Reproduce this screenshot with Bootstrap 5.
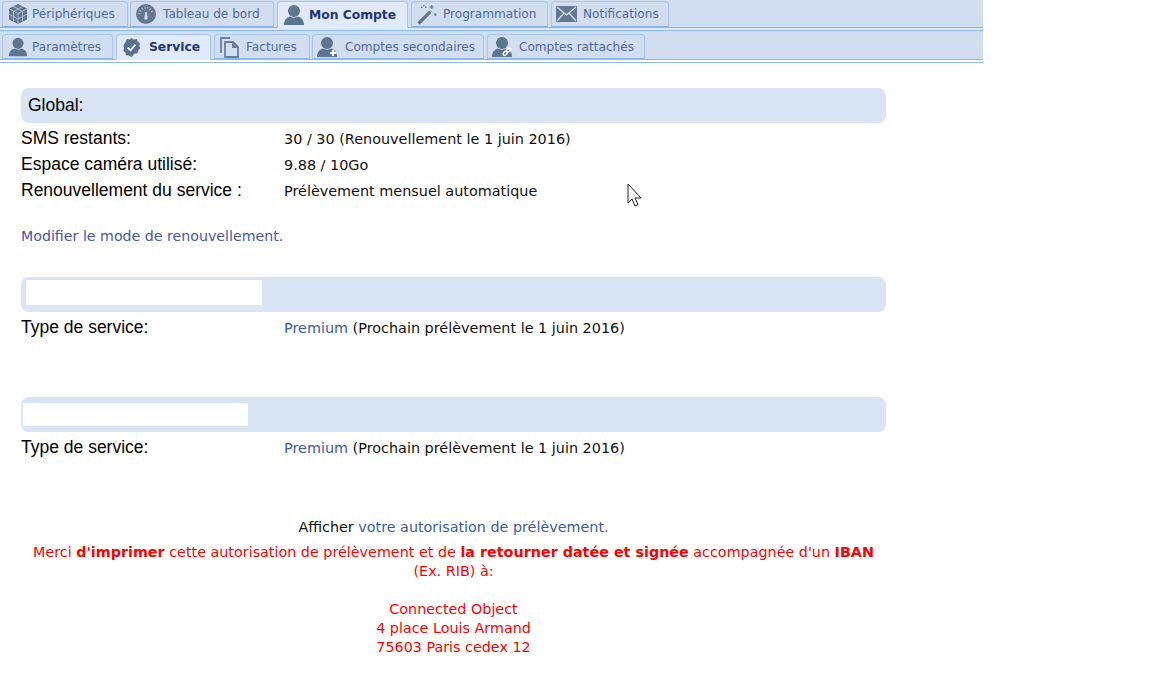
<!DOCTYPE html>
<html lang="fr">
<head>
<meta charset="utf-8">
<title>Service</title>
<link href="https://cdn.jsdelivr.net/npm/bootstrap@5.3.0/dist/css/bootstrap.min.css" rel="stylesheet">
<style>
html,body{height:686px;overflow:hidden;background:#fff}
body{font-family:"DejaVu Sans",sans-serif;font-size:14px;color:#111}
.tabstrip{width:983px;background:#d0deef;display:flex;padding-left:2px;margin:0;list-style:none}
.strip-a{height:28px;padding-top:1px;border-bottom:1px solid #93b2d8;box-shadow:0 2px 0 #dfe9f6}
.strip-b{height:30px;margin-top:2px;padding-top:3px;border-top:1px solid #8db8ee;border-bottom:1px solid #8db8ee;box-shadow:0 2px 0 #fff,0 3px 0 #8db8ee}
.tabbox{height:100%;display:flex;align-items:center;gap:5px;padding:1px 6px 0 4px;border:1px solid #a9c5ea;border-bottom:1px solid #8db8ee;border-radius:4px 4px 0 0;color:#4f6a96;font-size:12.1px;white-space:nowrap;background:#d0deef;box-sizing:border-box}
.tabbox.current{background:#dfeafa;color:#1f3471;font-weight:700;font-size:12.3px;border-bottom-color:#dfeafa;height:calc(100% + 1px)}
.tabbox svg{flex:none;display:block;margin-top:-1px}
.w-a{width:126px;gap:3px}.w-b{width:144px;margin-left:2px;gap:6px}.w-c{width:131px;margin-left:3px;gap:3px}.w-d{width:137px;margin-left:3px}.w-e{width:118px;margin-left:3px;gap:6px}
.w-f{width:111px;gap:3px}.w-g{width:95px;margin-left:3px;gap:7px}.w-h{width:96px;margin-left:3px}.w-i{width:172px;margin-left:2px;gap:6px}.w-j{width:158px;margin-left:3px}
.zone{width:865px;margin-left:21px;position:relative}
.headbar{height:35px;background:#d9e4f4;border-radius:8px;display:flex;align-items:center;padding-left:7px;font-family:"Liberation Sans",Arial,sans-serif;font-size:17.5px;color:#000}
.firstbar{margin-top:28px}
.maskbox{background:#fff}
.mask-a{width:236px;height:25px;margin-left:-2px;margin-top:-4px}
.mask-b{width:225px;height:23px;margin-left:-5px}
.datarow{display:flex;align-items:center;height:26px}
.lab{width:263px;flex:none;font-family:"Liberation Sans",Arial,sans-serif;font-size:17.5px;color:#000;margin-top:-4px}
.val{font-size:14.4px;color:#111}
.lnk{color:#3d5a9e;text-decoration:none}
.modlink{display:block;margin-top:21px;font-size:14.2px;line-height:20px;color:#48579d;text-decoration:none}
.sec-b{margin-top:31px}
.sec-c{margin-top:55px}
.closing{margin-top:56px;text-align:center;font-size:14.33px;line-height:19px;color:#f00}
.closing p{margin:0}
.closing b{font-weight:700}
.blk{color:#111;margin-bottom:6px!important}
.addr{margin-top:19px!important}
.arrowmark{position:absolute;left:627px;top:183px}
</style>
</head>
<body>
<ul class="tabstrip strip-a">
<li class="tabbox w-a"><svg width="22" height="22" viewBox="0 0 22 22"><path fill="#64778f" d="M11 1l9 4.500v11L11 21l-9-4.500v-11z"/><path fill="none" stroke="#b4c2d6" stroke-width=".9" d="M2.500 6L11 10.500 19.500 6M11 10.500V21M6.500 3.500L15.500 8.500v10M15.500 3.500L6.500 8.500v10M2.500 11.500L11 16l8.500-4.500"/></svg>Périphériques</li>
<li class="tabbox w-b"><svg width="22" height="22" viewBox="0 0 22 22"><circle cx="11" cy="11" r="10" fill="#64778f"/><path stroke="#b4c2d6" stroke-width="2" stroke-dasharray="1 1.800" fill="none" d="M4.500 11a6.500 6.500 0 0 1 13 0"/><path fill="#d0deef" d="M10.300 9h1.400l.8 5h-3z"/><circle cx="11" cy="15" r="1.800" fill="#d0deef"/></svg>Tableau de bord</li>
<li class="tabbox w-c current"><svg width="24" height="22" viewBox="0 0 24 22"><circle cx="12" cy="7" r="6" fill="#5f7490"/><path fill="#5f7490" d="M2 21c0-6 4-8 6-8.500 2 1.500 6 1.500 8 0 2 .5 6 2.500 6 8.500z"/></svg>Mon Compte</li>
<li class="tabbox w-d"><svg width="22" height="22" viewBox="0 0 22 22"><path stroke="#64778f" stroke-width="3.200" d="M2.500 20.500L15 8"/><path stroke="#e4ecf7" stroke-width="1" d="M13 7l3 3"/><g fill="#7588a5"><path d="M7 2h1.500v1.500H7zM5 3.500h1.500V5H5zM9 3.500h1.500V5H9zM15 2h1.500v4H15zM13.500 3.300h4v1.400h-4zM18.500 10h1.400v3h-1.400zM17.700 11h3v1.200h-3z"/></g></svg>Programmation</li>
<li class="tabbox w-e"><svg width="21" height="16" viewBox="0 0 21 16"><rect width="21" height="16" fill="#64778f"/><path fill="none" stroke="#d0deef" stroke-width="1.300" d="M1 1l9.500 8L20 1M1 15l7-8M20 15l-7-8"/></svg>Notifications</li>
</ul>
<ul class="tabstrip strip-b">
<li class="tabbox w-f"><svg width="22" height="22" viewBox="0 0 24 22"><circle cx="12" cy="7" r="6" fill="#5f7490"/><path fill="#5f7490" d="M2 21c0-6 4-8 6-8.500 2 1.500 6 1.500 8 0 2 .5 6 2.500 6 8.500z"/></svg>Paramètres</li>
<li class="tabbox w-g current"><svg width="21" height="21" viewBox="0 0 22 22"><path fill="#5c6f8e" d="M11 1l2.500 1.500 3-.3 1 2.800 2.500 1.700-.8 2.800 1 2.500-2.300 2-.6 3-3 .3L11 21l-2.800-1.500-3-.3-.6-3-2.300-2 1-2.500-.8-2.800L5 5l1-2.800 3 .3z"/><path fill="none" stroke="#e6eefa" stroke-width="2" d="M7 11l3 3 5-6"/></svg>Service</li>
<li class="tabbox w-h"><svg width="22" height="22" viewBox="0 0 22 22"><path fill="none" stroke="#6d7f9f" stroke-width="1.800" d="M2 17V2h9M6 21V6h8l5 5v10z"/><path fill="#6d7f9f" d="M13 6h2l4 4v2h-6z"/></svg>Factures</li>
<li class="tabbox w-i"><svg width="22" height="22" viewBox="0 0 22 22"><circle cx="10" cy="7" r="6" fill="#5f7490"/><path fill="#5f7490" d="M0 21c0-6 4-8 6-8.500 2 1.500 6 1.500 8 0 2 .5 6 2.500 6 8.500z"/><path stroke="#fff" stroke-width="2" d="M16 14v6M13 17h6"/></svg>Comptes secondaires</li>
<li class="tabbox w-j"><svg width="22" height="22" viewBox="0 0 22 22"><circle cx="10" cy="7" r="6" fill="#5f7490"/><path fill="#5f7490" d="M0 21c0-6 4-8 6-8.500 2 1.500 6 1.500 8 0 2 .5 6 2.500 6 8.500z"/><g fill="none" stroke="#fff" stroke-width="1.500"><rect x="11" y="16" width="4.500" height="3" rx="1.500" transform="rotate(-45 13 17.500)"/><rect x="14.500" y="12.500" width="4.500" height="3" rx="1.500" transform="rotate(-45 16.500 14)"/></g></svg>Comptes rattachés</li>
</ul>
<main class="zone" id="svc">
<div class="headbar firstbar" id="h1">Global:</div>
<div class="datarow mt-1"><div class="lab">SMS restants:</div><div class="val">30 / 30 (Renouvellement le 1 juin 2016)</div></div>
<div class="datarow"><div class="lab">Espace caméra utilisé:</div><div class="val">9.88 / 10Go</div></div>
<div class="datarow"><div class="lab">Renouvellement du service :</div><div class="val">Prélèvement mensuel automatique</div></div>
<a class="modlink" href="#">Modifier le mode de renouvellement.</a>
<div class="headbar sec-b"><div class="maskbox mask-a"></div></div>
<div class="datarow mt-1"><div class="lab">Type de service:</div><div class="val"><a class="lnk" href="#">Premium</a> (Prochain prélèvement le 1 juin 2016)</div></div>
<div class="headbar sec-c"><div class="maskbox mask-b"></div></div>
<div class="datarow mt-1"><div class="lab">Type de service:</div><div class="val"><a class="lnk" href="#">Premium</a> (Prochain prélèvement le 1 juin 2016)</div></div>
<div class="closing">
<p class="blk">Afficher <a class="lnk" href="#">votre autorisation de prélèvement.</a></p>
<p>Merci <b>d'imprimer</b> cette autorisation de prélèvement et de <b>la retourner datée et signée</b> accompagnée d'un <b>IBAN</b><br>(Ex. RIB) à:</p>
<p class="addr">Connected Object<br>4 place Louis Armand<br>75603 Paris cedex 12</p>
</div>
</main>
<svg class="arrowmark" width="16" height="25" viewBox="0 0 16 25"><path fill="#fff" stroke="#222" stroke-width="1" d="M1 1v19l4-4 3 7 3-1.500-3-6.500h6z"/></svg>
<script src="https://cdn.jsdelivr.net/npm/bootstrap@5.3.0/dist/js/bootstrap.bundle.min.js"></script>
</body>
</html>
